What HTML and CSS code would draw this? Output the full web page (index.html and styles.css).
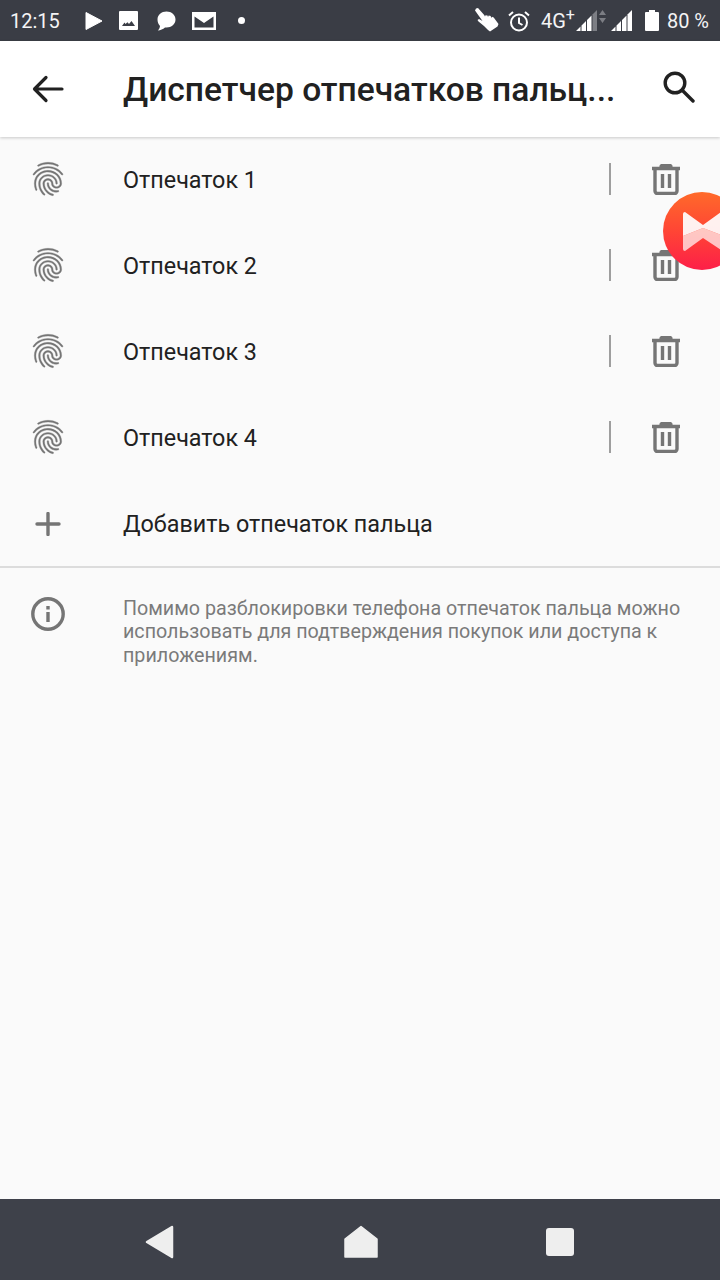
FILE: index.html
```html
<!doctype html>
<html lang="ru">
<head>
  <title>Диспетчер отпечатков пальца</title>
  <meta charset="utf-8" />
  <meta name="viewport" content="width=device-width,initial-scale=1" />
  <link rel="stylesheet" href="styles.css">
</head>
<body>
  <svg class="defs" width="0" height="0">
    <symbol id="fingerprint" viewBox="0 0 24 24">
      <path d="M17.81 4.47c-.08 0-.16-.02-.23-.06C15.66 3.42 14 3 12.01 3c-1.98 0-3.86.47-5.57 1.41-.24.13-.54.04-.68-.2-.13-.24-.04-.55.2-.68C7.82 2.52 9.86 2 12.01 2c2.13 0 3.99.47 6.03 1.52.25.13.34.43.21.67-.09.18-.26.28-.44.28zM3.5 9.72c-.1 0-.2-.03-.29-.09-.23-.16-.28-.47-.12-.7.99-1.4 2.25-2.5 3.75-3.27C9.98 4.04 14 4.03 17.15 5.65c1.5.77 2.76 1.86 3.75 3.25.16.22.11.54-.12.7-.23.16-.54.11-.7-.12-.9-1.26-2.04-2.25-3.39-2.94-2.87-1.47-6.54-1.47-9.4.01-1.36.7-2.5 1.7-3.4 2.96-.08.14-.23.21-.39.21zm6.25 12.07c-.13 0-.26-.05-.35-.15-.87-.87-1.34-1.43-2.01-2.64-.69-1.23-1.05-2.73-1.05-4.34 0-2.97 2.54-5.39 5.66-5.39s5.66 2.42 5.66 5.39c0 .28-.22.5-.5.5s-.5-.22-.5-.5c0-2.42-2.09-4.39-4.66-4.39-2.57 0-4.66 1.97-4.66 4.39 0 1.44.32 2.77.93 3.85.64 1.15 1.08 1.64 1.85 2.42.19.2.19.51 0 .71-.11.1-.24.15-.37.15zm7.17-1.85c-1.19 0-2.24-.3-3.1-.89-1.49-1.01-2.38-2.65-2.38-4.39 0-.28.22-.5.5-.5s.5.22.5.5c0 1.41.72 2.74 1.94 3.56.71.48 1.54.71 2.54.71.24 0 .64-.03 1.04-.1.27-.05.53.13.58.41.05.27-.13.53-.41.58-.57.11-1.07.12-1.21.12zM14.91 22c-.04 0-.09-.01-.13-.02-1.59-.44-2.63-1.03-3.72-2.1-1.4-1.39-2.17-3.24-2.17-5.22 0-1.62 1.38-2.94 3.08-2.94 1.7 0 3.08 1.32 3.08 2.94 0 1.07.93 1.94 2.08 1.94s2.08-.87 2.08-1.94c0-3.77-3.25-6.83-7.25-6.83-2.84 0-5.44 1.58-6.61 4.03-.39.81-.59 1.76-.59 2.8 0 .78.07 2.01.67 3.61.1.26-.03.55-.29.64-.26.1-.55-.04-.64-.29-.49-1.31-.73-2.61-.73-3.96 0-1.2.23-2.29.68-3.24 1.33-2.79 4.28-4.6 7.51-4.6 4.55 0 8.25 3.51 8.25 7.83 0 1.62-1.38 2.94-3.08 2.94s-3.08-1.32-3.08-2.94c0-1.07-.93-1.94-2.08-1.94s-2.08.87-2.08 1.94c0 1.71.66 3.31 1.87 4.51.95.94 1.86 1.46 3.27 1.85.27.07.42.35.35.61-.05.23-.26.38-.47.38z"/>
    </symbol>
    <symbol id="trash" viewBox="0 0 28 31">
      <path d="M0 4.500h28M9 4.500V3a1.500 1.500 0 0 1 1.500-1.500h7A1.500 1.500 0 0 1 19 3v1.500M3 4.500V27a2.500 2.500 0 0 0 2.500 2.500h17A2.500 2.500 0 0 0 25 27V4.500M10.500 10v14M17.500 10v14" fill="none" stroke="currentColor" stroke-width="3.400"/>
    </symbol>
    <symbol id="signal" viewBox="0 0 21 21">
      <path d="M0 21l4.500-4.500V21zM5.500 21v-5.500l4.500-4.500v10zM11 21V10l4.500-4.500V21z" fill="#fff"/>
      <path d="M16.500 21V4.500L21 0v21z" fill="currentColor"/>
    </symbol>
  </svg>

  <div class="status-bar">
    <span class="clock">12:15</span>
    <svg class="st-play" width="18" height="20" viewBox="0 0 18 20"><path d="M1 1.500 17 10 1 18.500z" fill="#fff" stroke="#fff" stroke-linejoin="round"/></svg>
    <svg class="st-image" width="19" height="19" viewBox="0 0 19 19"><path fill-rule="evenodd" d="M1 0h17a1 1 0 0 1 1 1v17a1 1 0 0 1-1 1H1a1 1 0 0 1-1-1V1a1 1 0 0 1 1-1zm2 15h13l-3.500-5-2.500 3-1.500-1.800L6.500 13 5.500 11.500z" fill="#fff"/></svg>
    <svg class="st-chat" width="20" height="20" viewBox="0 0 20 20"><path d="M10.500 0.500c5 0 9 3.500 9 8s-4 8-9 8c-.5 0-1 0-1.500-.1C7 18 4.500 19.300 1.800 19.500c1-1 2-2.600 2.200-4.600C2.300 13.400 1.500 11 1.500 8.500c0-4.500 4-8 9-8z" fill="#fff"/></svg>
    <svg class="st-mail" width="24" height="18" viewBox="0 0 24 18"><path fill-rule="evenodd" d="M0 0h24v18H0zM2.500 4.500 12 11l9.500-6.500v11h-19z" fill="#fff"/></svg>
    <span class="st-dot"></span>

    <svg class="st-hand" width="24" height="24" viewBox="0 0 24 24"><path d="M1 .5 3 0l6.200 7 .8 1.500.5-1.300 2 .3.500 1.500.7-1.500 2 .5.500 2 .8-1.200 1.700.6L23.500 16l-1 2.500L15 23.500l-2-1.500-4-4-5.500-4.500L2.500 12l1.500-1 3.500 2L0 2.500z" fill="#fff"/></svg>
    <svg class="st-alarm" width="22" height="22" viewBox="0 0 22 22"><g fill="none" stroke="#fff" stroke-width="2"><circle cx="11" cy="12.500" r="8"/><path d="M11 7.500v5.500l3.500 2M1 5.500 5 2M21 5.500 17 2"/></g></svg>
    <span class="st-net">4G<sup>+</sup></span>
    <svg class="st-signal dim" width="21" height="21"><use href="#signal"/></svg>
    <svg class="st-arrows" width="7" height="21" viewBox="0 0 7 21"><path d="M3.500 0 7 5H0zM3.500 13 0 8h7z" fill="#7c7e84"/></svg>
    <svg class="st-signal2" width="21" height="21"><use href="#signal"/></svg>
    <svg class="st-battery" width="14" height="21" viewBox="0 0 14 21"><path d="M4 0h6v2h3a1 1 0 0 1 1 1v17a1 1 0 0 1-1 1H1a1 1 0 0 1-1-1V3a1 1 0 0 1 1-1h3z" fill="#fff"/></svg>
    <span class="st-level">80 %</span>
  </div>

  <header class="toolbar">
    <svg class="back" width="32" height="28" viewBox="0 0 32 28"><path d="M30 14H3M14 2.500 2.500 14 14 25.500" fill="none" stroke="#212121" stroke-width="3.200" stroke-linecap="round" stroke-linejoin="round"/></svg>
    <h1>Диспетчер отпечатков пальц...</h1>
    <svg class="search" width="32" height="32" viewBox="0 0 32 32"><g fill="none" stroke="#212121" stroke-width="3.400"><circle cx="12" cy="12" r="9.800"/><path d="m19 19 11 11" stroke-linecap="round"/></g></svg>
  </header>

  <main class="content">
    <ul class="prints">
      <li class="row">
        <svg class="row-icon"><use href="#fingerprint"/></svg>
        <span class="row-label">Отпечаток 1</span>
        <span class="sep"></span>
        <svg class="trash" width="28" height="31"><use href="#trash"/></svg>
      </li>
      <li class="row">
        <svg class="row-icon"><use href="#fingerprint"/></svg>
        <span class="row-label">Отпечаток 2</span>
        <span class="sep"></span>
        <svg class="trash" width="28" height="31"><use href="#trash"/></svg>
      </li>
      <li class="row">
        <svg class="row-icon"><use href="#fingerprint"/></svg>
        <span class="row-label">Отпечаток 3</span>
        <span class="sep"></span>
        <svg class="trash" width="28" height="31"><use href="#trash"/></svg>
      </li>
      <li class="row">
        <svg class="row-icon"><use href="#fingerprint"/></svg>
        <span class="row-label">Отпечаток 4</span>
        <span class="sep"></span>
        <svg class="trash" width="28" height="31"><use href="#trash"/></svg>
      </li>
      <li class="row row-add">
        <svg class="plus" width="26" height="24" viewBox="0 0 26 24"><path d="M13 1.500v21M2 12h22" stroke="#757575" stroke-width="3.400" stroke-linecap="round"/></svg>
        <span class="row-label">Добавить отпечаток пальца</span>
      </li>
    </ul>

    <div class="info">
      <svg class="info-icon" width="34" height="34" viewBox="0 0 34 34"><circle cx="17" cy="17" r="15.200" fill="none" stroke="#757575" stroke-width="3.400"/><path d="M15.300 15h3.400v10h-3.400zM15.300 9h3.400v3.400h-3.400z" fill="#757575"/></svg>
      <p>Помимо разблокировки телефона отпечаток пальца можно использовать для подтверждения покупок или доступа к приложениям.</p>
    </div>
  </main>

  <nav class="nav-bar">
    <svg width="30" height="34" viewBox="0 0 30 34"><path d="M27 2 2 17l25 15z" fill="#eee" stroke="#eee" stroke-width="2.500" stroke-linejoin="round"/></svg>
    <svg width="34" height="34" viewBox="0 0 34 34"><path d="M17 1.500 33 14v18H1V14z" fill="#eee" stroke="#eee" stroke-width="1.500" stroke-linejoin="round"/></svg>
    <span class="nav-square"></span>
  </nav>

  <div class="bubble">
    <svg width="78" height="78" viewBox="0 0 78 78">
      <path d="M22 20 40 33l18-13a2 2 0 0 1 3 2v22L40 36 20 44V22a2 2 0 0 1 2-2z" fill="#fff" opacity=".92"/>
      <path d="M20 44l20-8 21 8v12a2 2 0 0 1-3 2L40 46 22 59a2 2 0 0 1-2-2z" fill="#fff" opacity=".7"/>
    </svg>
  </div>
</body>
</html>
```

FILE: styles.css
```css
* {
  box-sizing: border-box;
}

html,
body {
  margin: 0;
  padding: 0;
  height: 100%;
}

body {
  background: #fafafa;
  color: #212121;
  display: flex;
  flex-direction: column;
  font-family: Roboto, "Noto Sans", sans-serif;
  overflow: hidden;
  position: relative;
}

.defs {
  position: absolute;
}

/* status bar */
.status-bar {
  align-items: center;
  background: #3a3d45;
  color: #f4f4f5;
  display: flex;
  flex: none;
  font-size: 20px;
  height: 41px;
  padding-left: 10px;
}

.status-bar svg {
  color: #fff;
  flex: none;
}

.status-bar svg.dim {
  color: #7c7e84;
}

.clock {
  width: 75px;
}

.st-image {
  margin-left: 16px;
}

.st-chat {
  margin-left: 18px;
}

.st-mail {
  margin-left: 16px;
}

.st-dot {
  background: #fff;
  border-radius: 50%;
  height: 7px;
  margin-left: 22px;
  width: 7px;
}

.st-hand {
  margin-left: auto;
  margin-top: -2px;
}

.st-alarm {
  margin-left: 9px;
}

.st-net {
  margin-left: 11px;
  width: 35px;
}

.st-net sup {
  font-size: 16px;
  line-height: 0;
}

.st-arrows {
  margin-left: 2px;
}

.st-signal2 {
  margin-left: 5px;
}

.st-battery {
  margin-left: 13px;
}

.st-level {
  margin-left: 8px;
  margin-right: 11px;
}

/* toolbar */
.toolbar {
  align-items: center;
  background: #fff;
  box-shadow: 0 1px 3px rgba(0, 0, 0, 0.2);
  display: flex;
  flex: none;
  height: 96px;
  padding-left: 32px;
  position: relative;
}

.toolbar h1 {
  flex: none;
  font-size: 33.600px;
  font-weight: 500;
  margin: 0 0 0 59px;
  white-space: nowrap;
  width: 540px;
}

.search {
  margin-top: -4px;
}

/* list */
.content {
  flex: 1;
}

.prints {
  border-bottom: 2px solid #dcdcdc;
  list-style: none;
  margin: 0;
  padding: 0;
}

.row {
  align-items: center;
  display: flex;
  height: 86px;
  padding-left: 123px;
  position: relative;
}

.row-add {
  height: 85px;
  padding-top: 1px;
}

.row-icon {
  fill: #757575;
  height: 40px;
  left: 27.500px;
  position: absolute;
  stroke: #757575;
  stroke-width: 0.2;
  top: 22px;
  width: 40px;
}

.plus {
  left: 34.500px;
  position: absolute;
  top: 31px;
}

.row-label {
  flex: 1;
  font-size: 23.350px;
}

.sep {
  background: #9e9e9e;
  height: 32px;
  margin-top: -2px;
  width: 2px;
}

.trash {
  color: #757575;
  margin: -2px 40px 0 41px;
}

/* info */
.info {
  padding: 28.500px 20px 0 123px;
  position: relative;
}

.info p {
  color: #7a7a7a;
  font-size: 19.700px;
  line-height: 23.500px;
  margin: 0;
}

.info-icon {
  left: 30.500px;
  position: absolute;
  top: 29px;
}

/* navigation */
.nav-bar {
  align-items: center;
  background: #3e414a;
  display: flex;
  flex: none;
  height: 81px;
  justify-content: space-between;
  padding: 4px 146px 0 145px;
}

.nav-square {
  background: #eee;
  border-radius: 3px;
  height: 28px;
  width: 28px;
}

/* floating chat head over the list */
.bubble {
  background: linear-gradient(#ff6a2a, #ff4535 50%, #fd1f48);
  border-radius: 50%;
  height: 78px;
  left: 663px;
  overflow: hidden;
  position: absolute;
  top: 192px;
  width: 78px;
}
```
